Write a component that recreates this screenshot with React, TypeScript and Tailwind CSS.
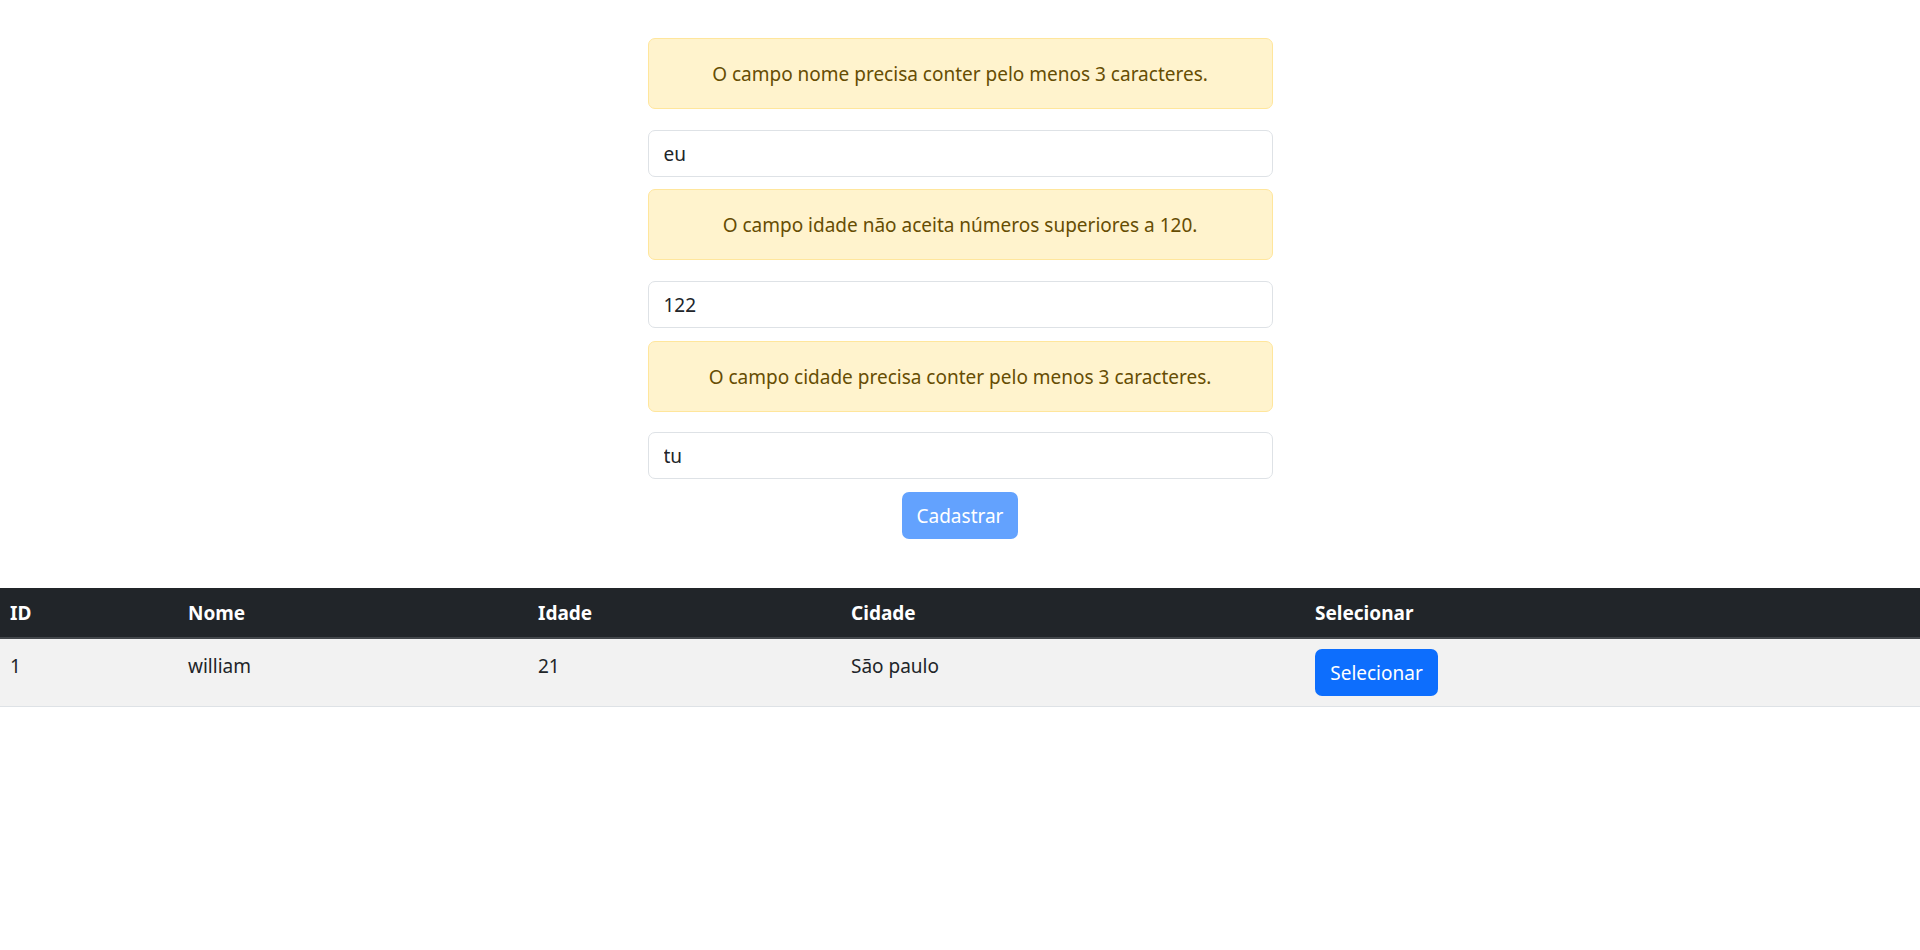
import React from "react";

const font = { fontFamily: '"Noto Sans", "Open Sans", Arial, sans-serif' };

function Alert({ children }: { children: React.ReactNode }) {
  return (
    <div className="flex h-[71px] w-full items-center justify-center rounded-[7px] border border-[#ffe69c] bg-[#fff3cd] px-5 pt-[1px] text-center text-[19px] leading-[30px] text-[#664d03]">
      {children}
    </div>
  );
}

function Input({ value }: { value: string }) {
  return (
    <input
      readOnly
      value={value}
      className="block h-[47px] w-full rounded-[7px] border border-[#dee2e6] bg-white px-[15px] text-[19px] leading-[30px] text-[#212529] outline-none"
      style={font}
    />
  );
}

export default function App() {
  return (
    <div className="min-h-[950px] w-full bg-white text-[#212529]" style={font}>
      <div className="mx-auto flex w-[625px] flex-col items-center pt-[38px]">
        <Alert>O campo nome precisa conter pelo menos 3 caracteres.</Alert>
        <div className="mt-[21px] w-full">
          <Input value="eu" />
        </div>
        <div className="mt-[12px] w-full">
          <Alert>O campo idade não aceita números superiores a 120.</Alert>
        </div>
        <div className="mt-[21px] w-full">
          <Input value="122" />
        </div>
        <div className="mt-[13px] w-full">
          <Alert>O campo cidade precisa conter pelo menos 3 caracteres.</Alert>
        </div>
        <div className="mt-[20px] w-full">
          <Input value="tu" />
        </div>
        <button
          disabled
          className="mt-[13px] h-[47px] w-[116px] rounded-[7px] bg-[#63a2fe] text-[19px] leading-[30px] text-white"
          style={font}
        >
          Cadastrar
        </button>
      </div>

      <table className="mt-[49px] w-full table-fixed border-collapse text-left text-[19px] leading-[30px]">
        <colgroup>
          <col className="w-[178px]" />
          <col className="w-[350px]" />
          <col className="w-[313px]" />
          <col className="w-[464px]" />
          <col />
        </colgroup>
        <thead>
          <tr className="h-[50px] border-b-2 border-[#43474b] bg-[#212529] text-white">
            <th className="px-[10px] py-[9px] font-bold">ID</th>
            <th className="px-[10px] py-[9px] font-bold">Nome</th>
            <th className="px-[10px] py-[9px] font-bold">Idade</th>
            <th className="px-[10px] py-[9px] font-bold">Cidade</th>
            <th className="px-[10px] py-[9px] font-bold">Selecionar</th>
          </tr>
        </thead>
        <tbody>
          <tr className="h-[68px] border-b border-[#dee2e6] bg-[#f2f2f2]">
            <td className="px-[10px] pt-[12px] pb-[10px] align-top">1</td>
            <td className="px-[10px] pt-[12px] pb-[10px] align-top">william</td>
            <td className="px-[10px] pt-[12px] pb-[10px] align-top">21</td>
            <td className="px-[10px] pt-[12px] pb-[10px] align-top">São paulo</td>
            <td className="px-[10px] pt-[10px] pb-[9px] align-top">
              <button
                className="h-[47px] w-[123px] rounded-[7px] bg-[#0d6efd] text-[19px] leading-[30px] text-white"
                style={font}
              >
                Selecionar
              </button>
            </td>
          </tr>
        </tbody>
      </table>
    </div>
  );
}
